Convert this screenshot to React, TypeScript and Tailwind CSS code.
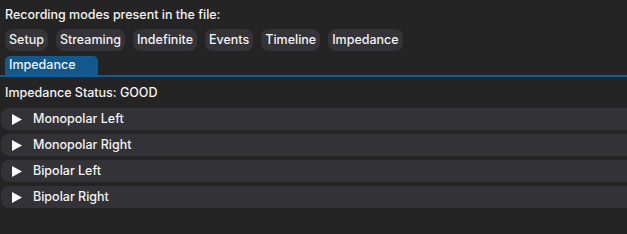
import React from "react";

const modes = ["Setup", "Streaming", "Indefinite", "Events", "Timeline", "Impedance"];
const sections = ["Monopolar Left", "Monopolar Right", "Bipolar Left", "Bipolar Right"];

function Triangle() {
  return (
    <svg width="10" height="11" viewBox="0 0 10 11" className="shrink-0">
      <polygon points="0,0 10,5.5 0,11" fill="#ffffff" />
    </svg>
  );
}

export default function App() {
  return (
    <div
      className="w-[627px] h-[234px] overflow-hidden bg-[#242424] text-[12.5px] font-medium text-[#f2f2f2] leading-none"
      style={{ fontFamily: "Inter, 'Noto Sans', sans-serif" }}
    >
      <div className="pl-[5px] pt-[9px] h-[21px]">Recording modes present in the file:</div>

      <div className="flex gap-[8px] pl-[5px] mt-[8px]">
        {modes.map((m) => (
          <div
            key={m}
            className="h-[22px] px-[4px] flex items-center rounded-[8px] bg-[#333338]"
          >
            {m}
          </div>
        ))}
      </div>

      <div className="mt-[5px] pl-[5px] border-b-2 border-[#0f5c96]">
        <div className="w-[93px] h-[19px] px-[4px] flex items-center rounded-t-[5px] bg-[#10588d]">
          Impedance
        </div>
      </div>

      <div className="pl-[5px] mt-[9px] h-[14px] flex items-center">Impedance Status: GOOD</div>

      <div className="flex flex-col gap-[4px] mt-[8px] pl-[1px] mr-[-10px]">
        {sections.map((s) => (
          <div
            key={s}
            className="h-[22px] flex items-center gap-[11px] pl-[11px] rounded-[8px] bg-[#323237]"
          >
            <Triangle />
            <span>{s}</span>
          </div>
        ))}
      </div>
    </div>
  );
}
